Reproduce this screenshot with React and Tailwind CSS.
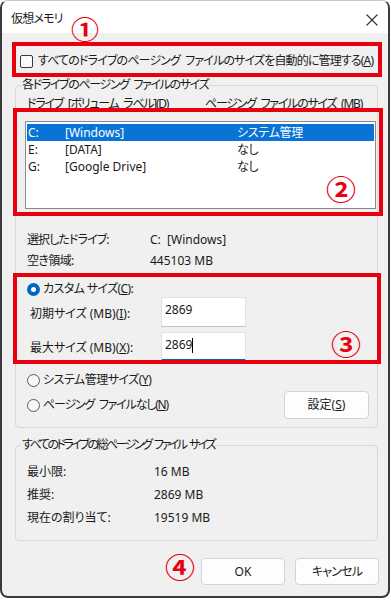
import React from "react";

const F = `font-['Noto_Sans','Noto_Sans_CJK_JP',sans-serif] [font-feature-settings:"palt"]`;
const S = "\u2002";

function Radio({ checked }) {
  return checked ? (
    <span className="w-[13px] h-[13px] rounded-full bg-[#0067c0] flex items-center justify-center shrink-0">
      <span className="w-[5px] h-[5px] rounded-full bg-white" />
    </span>
  ) : (
    <span className="w-[13px] h-[13px] rounded-full border border-[#5a5a5a] bg-[#f7f7f7] shrink-0" />
  );
}

function Group({ label, children, className = "", labelClass = "" }) {
  return (
    <fieldset className={"ml-[13px] mr-[10px] border border-[#d8d8d8] rounded-[4px] " + className}>
      <legend className={"ml-[5px] px-[1px] h-[18px] leading-[18px] text-[12px] text-[#1a1a1a] whitespace-nowrap " + labelClass}>{label}</legend>
      {children}
    </fieldset>
  );
}

function Btn({ children, className = "" }) {
  return (
    <div className={"h-[27px] flex items-center justify-center rounded-[4px] bg-[#fdfdfd] border border-[#d4d4d4] text-[12px] text-[#1a1a1a] " + className}>
      {children}
    </div>
  );
}

export default function App() {
  return (
    <div className={"relative w-[391px] h-[600px] bg-white " + F}>
      <div className="w-[390px] h-[598px] flex flex-col border-l-2 border-r-2 border-b-2 border-t border-t-[#c8c8c8] border-x-[#3a3a3a] border-b-[#3a3a3a] rounded-[8px] overflow-hidden bg-[#f0f0f0] text-[12px] text-[#1a1a1a]">
        {/* title bar */}
        <div className="h-[32px] bg-white flex items-center justify-between pl-[9px] pr-[10px] pt-[3px] shrink-0">
          <span className="text-[12px] text-[#1a1a1a] tracking-[-0.8px]">仮想メモリ</span>
          <svg width="12" height="12" viewBox="0 0 12 12" className="mt-[2px]">
            <path d="M0.5 0.5 L11.5 11.5 M11.5 0.5 L0.5 11.5" stroke="#333" strokeWidth="1.1" />
          </svg>
        </div>

        {/* checkbox row */}
        <div className="mt-[19px] h-[18px] flex items-center pl-[18px]">
          <span className="w-[13px] h-[13px] border border-[#3a3a3a] rounded-[2px] bg-[#fafafa] shrink-0" />
          <span className="ml-[5px] whitespace-nowrap tracking-[-0.85px]">
            すべてのドライブのページング{S}ファイルのサイズを自動的に管理する(<u>A</u>)
          </span>
        </div>

        {/* group 1 */}
        <Group label={`各ドライブのページング${S}ファイルのサイズ`} className="mt-[6px]" labelClass="tracking-[-1.35px]">
          <div className="mt-[2px] h-[16px] flex items-center pl-[11px] whitespace-nowrap tracking-[-1.25px]">
            <span className="w-[178px]">ドライブ{S}[ボリューム{S}ラベル](<u>D</u>)</span>
            <span>ページング{S}ファイルのサイズ{S}(MB)</span>
          </div>
          <div className="mt-[9px] ml-[9px] mr-[1px] h-[88px] bg-white border border-[#8a8a8a] pt-[2px] px-[1px]">
            {[
              ["C:", "[Windows]", "システム管理", true],
              ["E:", "[DATA]", "なし", false],
              ["G:", "[Google Drive]", "なし", false],
            ].map(([d, l, s, sel]) => (
              <div
                key={d}
                className={
                  "h-[17px] flex items-center pl-[1px] " +
                  (sel ? "bg-[#0a74d6] text-white" : "text-[#1a1a1a]")
                }
              >
                <span className="w-[37px]">{d}</span>
                <span className="w-[172px]">{l}</span>
                <span className="tracking-[-0.3px]">{s}</span>
              </div>
            ))}
          </div>

          <div className="mt-[22px] pl-[11px] flex flex-col gap-[3px]">
            <div className="h-[18px] flex items-center">
              <span className="w-[123px] tracking-[-0.9px]">選択したドライブ:</span>
              <span>C:&nbsp;&nbsp;[Windows]</span>
            </div>
            <div className="h-[18px] flex items-center">
              <span className="w-[123px] tracking-[-0.6px]">空き領域:</span>
              <span>445103 MB</span>
            </div>
          </div>

          <div className="mt-[11px] pl-[11px] h-[16px] flex items-center">
            <Radio checked />
            <span className="ml-[3px] tracking-[-0.6px]">カスタム サイズ(<u>C</u>):</span>
          </div>

          <div className="pl-[14px] flex flex-col gap-[5px]">
            <div className="h-[30px] flex items-center">
              <span className="w-[131px] pt-[3px]">初期サイズ (MB)(<u>I</u>):</span>
              <div className="w-[85px] h-[30px] bg-white border border-[#e2e2e2] border-b-[#c2c2c2] pl-[3px] pt-[4px] leading-[16px]">
                2869
              </div>
            </div>
            <div className="h-[29px] flex items-center">
              <span className="w-[131px] pt-[3px]">最大サイズ (MB)(<u>X</u>):</span>
              <div className="w-[85px] h-[29px] bg-white border border-[#e2e2e2] border-b-2 border-b-[#0067c0] pl-[3px] pt-[4px] leading-[16px] flex items-start">
                <span>2869</span>
                <span className="w-[1px] h-[15px] bg-black mt-[1px]" />
              </div>
            </div>
          </div>

          <div className="mt-[11px] pl-[11px] h-[16px] flex items-center">
            <Radio />
            <span className="ml-[3px] tracking-[-0.5px]">システム管理サイズ(<u>Y</u>)</span>
          </div>
          <div className="mt-[3px] pl-[11px] pr-[8px] h-[28px] flex items-center justify-between">
            <div className="flex items-center">
              <Radio />
              <span className="ml-[3px] tracking-[-1.2px]">ページング{S}ファイルなし(<u>N</u>)</span>
            </div>
            <Btn className="w-[85px] h-[28px] border-[#8fa6c8]">
              設定(<u>S</u>)
            </Btn>
          </div>
          <div className="h-[8px]" />
        </Group>

        {/* group 2 */}
        <Group label={`すべてのドライブの総ページング${S}ファイル${S}サイズ`} className="mt-[8px]" labelClass="tracking-[-2.5px]">
          <div className="mt-[9px] pl-[11px] flex flex-col gap-[5px]">
            {[
              ["最小限:", "16 MB"],
              ["推奨:", "2869 MB"],
              ["現在の割り当て:", "19519 MB"],
            ].map(([a, b]) => (
              <div key={a} className="h-[18px] flex items-center">
                <span className="w-[127px]">{a}</span>
                <span>{b}</span>
              </div>
            ))}
          </div>
          <div className="h-[13px]" />
        </Group>

        {/* buttons */}
        <div className="mt-[17px] pr-[9px] flex justify-end gap-[10px]">
          <Btn className="w-[84px]">OK</Btn>
          <Btn className="w-[84px] tracking-[-0.8px]">キャンセル</Btn>
        </div>
      </div>

      {/* annotations */}
      <div className="absolute left-[12px] top-[42px] w-[370px] h-[35px] border-4 border-[#e8000f]" />
      <div className="absolute left-[13px] top-[108px] w-[370px] h-[108px] border-4 border-[#e8000f]" />
      <div className="absolute left-[13px] top-[273px] w-[368px] h-[91px] border-4 border-[#e8000f]" />

      <span className="absolute left-[85px] top-[29px] -translate-x-1/2 -translate-y-1/2 scale-y-90 text-[28px] leading-none font-bold text-[#e8000f]">①</span>
      <span className="absolute left-[341px] top-[190px] -translate-x-1/2 -translate-y-1/2 scale-y-90 text-[30px] leading-none font-bold text-[#e8000f]">②</span>
      <span className="absolute left-[346px] top-[345px] -translate-x-1/2 -translate-y-1/2 scale-y-90 text-[30px] leading-none font-bold text-[#e8000f]">③</span>
      <span className="absolute left-[180px] top-[568px] -translate-x-1/2 -translate-y-1/2 scale-y-90 text-[30px] leading-none font-bold text-[#e8000f]">④</span>
    </div>
  );
}
